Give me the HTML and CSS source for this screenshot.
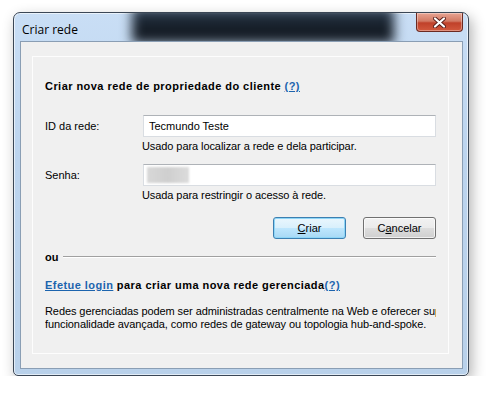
FILE: index.html
```html
<!DOCTYPE html>
<html lang="pt">
<head>
    <meta charset="UTF-8">
    <title>Criar rede</title>
    <link rel="stylesheet" href="styles.css">
</head>
<body>

<div class="window">
    <div class="titlebar">
        <div class="glass-blur"></div>
        <span class="title">Criar rede</span>
        <button class="close" aria-label="Fechar">
            <svg width="13" height="11" viewBox="0 0 13 11">
                <path d="M2 1.5 L11 9.5 M11 1.5 L2 9.5" stroke="#5a1f1a" stroke-width="4" stroke-linecap="round"/>
                <path d="M2 1.5 L11 9.5 M11 1.5 L2 9.5" stroke="#fff" stroke-width="2.2" stroke-linecap="round"/>
            </svg>
        </button>
    </div>

    <div class="client">
        <div class="panel">
            <h2 class="heading">Criar nova rede de propriedade do cliente <a href="#">(?)</a></h2>

            <div class="field">
                <label>ID da rede:</label>
                <div class="input">Tecmundo Teste</div>
            </div>
            <p class="hint">Usado para localizar a rede e dela participar.</p>

            <div class="field second">
                <label>Senha:</label>
                <div class="input"><span class="blurred"></span></div>
            </div>
            <p class="hint">Usada para restringir o acesso à rede.</p>

            <div class="buttons">
                <button class="btn default"><u>C</u>riar</button>
                <button class="btn">C<u>a</u>ncelar</button>
            </div>

            <div class="separator">
                <span>ou</span>
            </div>

            <p class="login"><a href="#">Efetue login</a> para criar uma nova rede gerenciada<a href="#">(?)</a></p>

            <p class="info">Redes gerenciadas podem ser administradas centralmente na Web e oferecer suporte a<br>
            funcionalidade avançada, como redes de gateway ou topologia hub-and-spoke.</p>
        </div>
    </div>
</div>

</body>
</html>
```

FILE: styles.css
```css
body {
    margin: 0;
    background: #ffffff;
    font-family: "Liberation Sans", Arial, sans-serif;
    font-size: 11px;
    color: #000;
}
.window {
    margin: 12px 0 0 13px;
    width: 456px;
    height: 364px;
    box-sizing: border-box;
    border: 1px solid #3b4756;
    border-radius: 7px 7px 5px 5px;
    background: linear-gradient(to bottom, #c9def5 0%, #bcd4ee 40%, #b9d1ea 100%);
    box-shadow: 3px 5px 14px rgba(0, 0, 0, 0.3), inset 0 0 0 1px rgba(255, 255, 255, 0.6);
    padding: 0 5px 6px 6px;
    overflow: hidden;
}
.titlebar {
    position: relative;
    height: 28px;
    display: flex;
    align-items: flex-start;
    justify-content: space-between;
}
.glass-blur {
    position: absolute;
    left: 112px;
    top: -6px;
    width: 262px;
    height: 36px;
    background: linear-gradient(to bottom, #33465c 0%, #18212c 45%, #10161e 100%);
    filter: blur(6px);
}
.title {
    position: relative;
    margin: 8px 0 0 2px;
    font-family: "Open Sans", "Noto Sans", sans-serif;
    font-size: 12px;
    color: #000;
}
.close {
    position: relative;
    margin: 0;
    width: 47px;
    height: 19px;
    border: 1px solid #6b2a22;
    border-top: none;
    border-radius: 0 0 4px 4px;
    background: linear-gradient(to bottom, #e8a493 0%, #d27a64 45%, #c0412a 55%, #d2593d 100%);
    box-shadow: inset 0 0 0 1px rgba(255, 255, 255, 0.35);
    display: flex;
    align-items: center;
    justify-content: center;
    padding: 0;
}
.client {
    position: relative;
    height: 328px;
    box-sizing: border-box;
    border: 1px solid #8a9eb4;
    background: #f0f0f0;
    padding: 14px 13px 14px 11px;
}
.panel {
    height: 100%;
    box-sizing: border-box;
    border: 1px solid #fdfdfd;
    padding: 22px 12px 0 12px;
}
.heading {
    margin: 0;
    font-size: 11px;
    font-weight: bold;
    line-height: 14px;
    letter-spacing: 0.45px;
}
a {
    color: #1c64ae;
    text-decoration: underline;
}
.field {
    display: flex;
    align-items: center;
    margin-top: 22px;
}
.field.second {
    margin-top: 11px;
}
.field label {
    width: 98px;
    flex: none;
}
.input {
    flex: 1;
    height: 22px;
    box-sizing: border-box;
    background: #fff;
    border: 1px solid #d9dde2;
    border-top-color: #aeb2b7;
    padding: 0 5px;
    line-height: 20px;
    display: flex;
    align-items: center;
}
.blurred {
    width: 42px;
    height: 16px;
    margin-left: -2px;
    background: linear-gradient(to right, #d8d8d8, #cfcfcf 50%, #dcdcdc);
    filter: blur(1px);
}
.hint {
    margin: 2px 0 0 97px;
    line-height: 14px;
    letter-spacing: -0.08px;
}
.buttons {
    display: flex;
    justify-content: flex-end;
    gap: 17px;
    margin-top: 15px;
}
.btn {
    width: 73px;
    height: 22px;
    font-family: inherit;
    font-size: 11px;
    border: 1px solid #707070;
    border-radius: 3px;
    background: linear-gradient(to bottom, #f2f2f2 0%, #ebebeb 48%, #dddddd 52%, #cfcfcf 100%);
    box-shadow: inset 0 0 0 1px rgba(255, 255, 255, 0.7);
    padding: 0;
    color: #000;
}
.btn.default {
    border-color: #3c7fb1;
    box-shadow: inset 0 0 0 1px #8ed6f7;
    background: linear-gradient(to bottom, #eaf6fd 0%, #d9f0fc 48%, #bee6fd 52%, #a7d9f5 100%);
}
.separator {
    display: flex;
    align-items: center;
    margin-top: 11px;
    font-weight: bold;
    line-height: 14px;
}
.separator::after {
    content: "";
    flex: 1;
    height: 1px;
    background: #a0a0a0;
    border-bottom: 1px solid #fff;
    margin-left: 5px;
}
.login {
    margin: 14px 0 0;
    font-weight: bold;
    line-height: 14px;
    letter-spacing: 0.45px;
}
.info {
    margin: 13px 0 0;
    line-height: 13px;
    white-space: nowrap;
    overflow: hidden;
    letter-spacing: -0.08px;
}
```
